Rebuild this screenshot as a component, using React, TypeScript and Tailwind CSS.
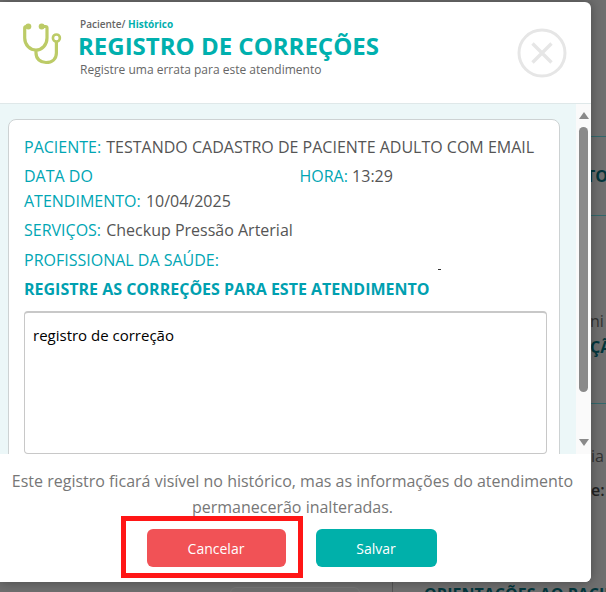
import React from "react";

const sans = { fontFamily: '"Open Sans", sans-serif' };

function Stethoscope() {
  return (
    <svg width="42" height="44" viewBox="0 0 42 44" fill="none" className="shrink-0">
      <path d="M6 3.5H4.2Q2.7 3.5 2.7 5V15C2.7 22 8 27 14 27C20 27 25 22 25 15V5Q25 3.5 23.5 3.5H21" stroke="#bccb67" strokeWidth="3.2" strokeLinejoin="round" />
      <circle cx="6.3" cy="3.5" r="3" fill="#bccb67" />
      <circle cx="19.7" cy="3.5" r="3" fill="#bccb67" />
      <path d="M14 27V30C14 36 18.5 39.5 24 39.5C30 39.5 34.4 36 34.4 30V19" stroke="#bccb67" strokeWidth="3.2" />
      <circle cx="34.4" cy="15" r="3.5" fill="#fff" stroke="#bccb67" strokeWidth="2.6" />
    </svg>
  );
}

function CloseIcon() {
  return (
    <svg width="50" height="50" viewBox="0 0 50 50" fill="none">
      <circle cx="25" cy="25" r="23" stroke="#e6e6e6" strokeWidth="3" />
      <path d="M15.5 15.5L34.5 34.5M34.5 15.5L15.5 34.5" stroke="#e6e6e6" strokeWidth="3.4" />
    </svg>
  );
}

function Label({ children }: { children: React.ReactNode }) {
  return <span className="text-[#00a6b4]">{children}</span>;
}

function Value({ children }: { children: React.ReactNode }) {
  return <span className="ml-px">{children}</span>;
}

function Page() {
  return (
    <>
      <div className="flex h-[582px] flex-col pl-[590px] text-[16px] leading-6">
        <div className="h-[137px] shrink-0 border-b border-[#33686c]" />
        <div className="h-[79px] shrink-0 border-b border-[#33686c] pt-[27px]">
          <div className="-ml-[4px] font-bold text-[#03363c]">TO</div>
        </div>
        <div className="h-[188px] shrink-0 border-b border-[#33686c] pt-[93px]">
          <div className="text-[#333]">ni</div>
          <div className="mt-[2px] font-bold text-[#03363c]">ÇÃ</div>
        </div>
        <div className="pl-px pt-[40px]">
          <div className="text-[#333]">ia</div>
          <div className="mt-[10px] font-semibold text-[#222]">e:</div>
        </div>
      </div>
      <div className="flex h-[10px] pl-[230px]">
        <div className="mt-[5px] h-[20px] w-[130px] shrink-0 rounded-[6px] border border-[#777]" />
        <div className="ml-[32px] h-full w-px shrink-0 bg-[#555]" />
        <div className="ml-[31px] whitespace-nowrap text-[16px] font-bold leading-6 text-[#03363c]">ORIENTAÇÕES AO PACIENTE</div>
      </div>
    </>
  );
}

export default function App() {
  return (
    <div className="relative h-[592px] w-[606px] overflow-hidden bg-[#6f6f6f]" style={sans}>
      <Page />

      <div className="absolute left-0 top-[2px] flex h-[580px] w-[591px] flex-col overflow-hidden rounded-r-[6px] bg-white shadow-[0_0_12px_rgba(0,0,0,0.35)]">
        <header className="flex h-[102px] shrink-0 items-start border-b border-[#dfe8e9] pl-[22px] pr-[24px]">
          <div className="mt-[21px]"><Stethoscope /></div>
          <div className="ml-[16px] mt-[15px] flex-1">
            <div className="text-[10px] font-semibold leading-[14px] text-[#666]">
              Paciente/ <span className="font-bold text-[#00b0ae]">Histórico</span>
            </div>
            <h1 className="-ml-[2px] text-[24px] font-bold leading-[30px] text-[#00b0ae]">REGISTRO DE CORREÇÕES</h1>
            <p className="mt-[1px] text-[12px] leading-[16px] text-[#666]">Registre uma errata para este atendimento</p>
          </div>
          <div className="mt-[26px]"><CloseIcon /></div>
        </header>

        <div className="flex min-h-0 flex-1">
          <div className="min-w-0 flex-1 bg-[#ecf7f8] pl-2 pr-4 pt-[15px]">
            <div className="h-[400px] rounded-t-[8px] border border-[#cdd2d3] bg-white pl-[15px] pr-3 pt-[14px] text-[16px] text-[#555]">
              <div className="h-[30px] whitespace-nowrap leading-[26px]"><Label>PACIENTE:</Label> <Value>TESTANDO CADASTRO DE PACIENTE ADULTO COM EMAIL</Value></div>
              <div className="flex h-[53px]">
                <div className="w-[275.5px] leading-[25px]"><Label>DATA DO<br />ATENDIMENTO:</Label> <Value>10/04/2025</Value></div>
                <div className="leading-[25px]"><Label>HORA:</Label> 13:29</div>
              </div>
              <div className="h-[30px] leading-[26px]"><Label>SERVIÇOS:</Label> <Value>Checkup Pressão Arterial</Value></div>
              <div className="flex h-[29px] leading-[26px]">
                <Label>PROFISSIONAL DA SAÚDE:</Label>
                <span className="ml-[219px] mt-[22px] h-px w-[3px] bg-[#333]" />
              </div>
              <div className="text-[16px] font-bold leading-[26px] text-[#00a0b0]">REGISTRE AS CORREÇÕES PARA ESTE ATENDIMENTO</div>
              <div className="mt-[9px] h-[143px] rounded-[4px] border border-t-2 border-[#c8c8c8] px-2 pt-[12px] text-[15px] leading-5 text-black">registro de correção</div>
            </div>
          </div>
          <div className="w-[15px] shrink-0 bg-[#fafafa]">
            <div className="mx-auto mt-[8px] h-0 w-0 border-x-[5px] border-b-[7px] border-x-transparent border-b-[#8a8a8a]" />
            <div className="mx-auto mt-[8px] h-[265px] w-[9px] rounded-[5px] bg-[#8a8a8a]" />
            <div className="mx-auto mt-[47px] h-0 w-0 border-x-[5px] border-t-[7px] border-x-transparent border-t-[#8a8a8a]" />
          </div>
        </div>

        <footer className="flex h-[128px] shrink-0 flex-col items-center bg-white pr-[6px] pt-[14px]">
          <p className="w-[575px] text-center text-[16px] leading-[26px] text-[#777]">
            Este registro ficará visível no histórico, mas as informações do atendimento permanecerão inalteradas.
          </p>
          <div className="mr-[2px] mt-[9px] flex gap-[30px]">
            <div className="relative">
              <button className="h-[38px] w-[139px] rounded-[6px] bg-[#f15256] text-[14px] font-medium text-white">Cancelar</button>
              <div className="pointer-events-none absolute -bottom-[11px] -left-[26px] -right-[17px] -top-[13px] border-[5px] border-[#ff1616]" />
            </div>
            <button className="h-[38px] w-[121px] rounded-[6px] bg-[#00b0aa] text-[14px] font-medium text-white">Salvar</button>
          </div>
        </footer>
      </div>
    </div>
  );
}
